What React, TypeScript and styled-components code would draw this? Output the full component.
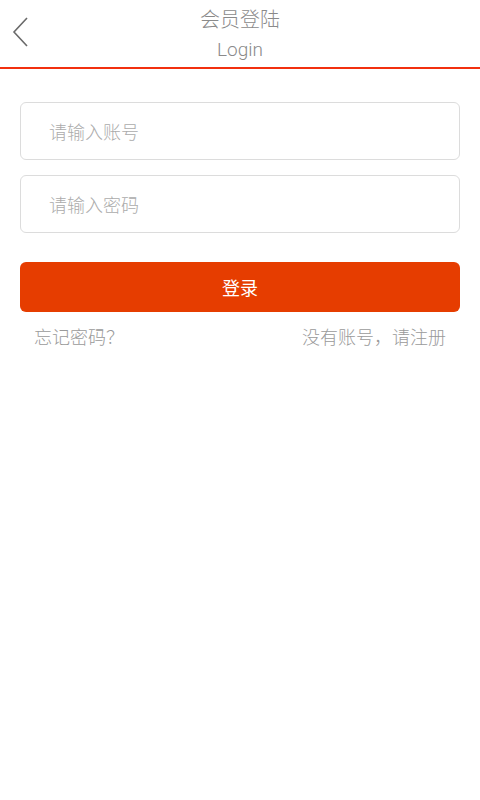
import * as React from "react";
import styled, { createGlobalStyle } from "styled-components";

const GlobalStyle = createGlobalStyle`
    html, body {
        margin: 0;
        padding: 0;
        background: #fff;
        font-family: "Noto Sans CJK SC", "Noto Sans", sans-serif;
    }
`;

const Page = styled.div`
    width: 480px;
    min-height: 800px;
    background: #fff;
`;

const Header = styled.header`
    position: relative;
    height: 67px;
    border-bottom: 2px solid #f2300f;
    display: flex;
    flex-direction: column;
    align-items: center;
    color: #8a8a8a;
`;

const BackButton = styled.div`
    position: absolute;
    left: 11px;
    top: 16px;
    width: 20px;
    height: 32px;
    cursor: pointer;
`;

const Title = styled.h1`
    margin: 4px 0 0;
    font-size: 20px;
    font-weight: 300;
    line-height: 30px;
`;

const SubTitle = styled.span`
    margin-top: 3px;
    font-family: Roboto, "Noto Sans", sans-serif;
    font-size: 19px;
    font-weight: 300;
    line-height: 26px;
    color: #8a8a8a;
`;

const Form = styled.form`
    padding: 33px 20px 0;
    display: flex;
    flex-direction: column;
`;

const Field = styled.input`
    box-sizing: border-box;
    height: 58px;
    margin-bottom: 15px;
    padding: 0 28px;
    border: 1px solid #dcdcdc;
    border-radius: 6px;
    font-family: "Noto Sans CJK SC", sans-serif;
    font-size: 18px;
    font-weight: 300;
    color: #333;
    outline: none;
    &::placeholder {
        color: #ababab;
    }
`;

const SubmitButton = styled.button`
    margin-top: 14px;
    height: 50px;
    border: none;
    border-radius: 6px;
    background: #e63d00;
    color: #fff;
    font-family: "Noto Sans CJK SC", sans-serif;
    font-size: 18px;
    cursor: pointer;
`;

const LinkRow = styled.div`
    display: flex;
    justify-content: space-between;
    padding: 0 14px;
    margin-top: 11px;
`;

const TextLink = styled.a`
    font-size: 18px;
    font-weight: 300;
    line-height: 26px;
    color: #9a9a9a;
    text-decoration: none;
    cursor: pointer;
`;

export default function App() {
    return (
        <Page>
            <GlobalStyle />
            <Header>
                <BackButton>
                    <svg width="20" height="32" viewBox="0 0 20 32">
                        <polyline points="16,2 3,16 16,30" fill="none" stroke="#6a6a6a" strokeWidth="1.6" />
                    </svg>
                </BackButton>
                <Title>会员登陆</Title>
                <SubTitle>Login</SubTitle>
            </Header>
            <Form onSubmit={(e) => e.preventDefault()}>
                <Field type="text" placeholder="请输入账号" />
                <Field type="password" placeholder="请输入密码" />
                <SubmitButton type="submit">登录</SubmitButton>
                <LinkRow>
                    <TextLink>忘记密码？</TextLink>
                    <TextLink>没有账号，请注册</TextLink>
                </LinkRow>
            </Form>
        </Page>
    );
}
